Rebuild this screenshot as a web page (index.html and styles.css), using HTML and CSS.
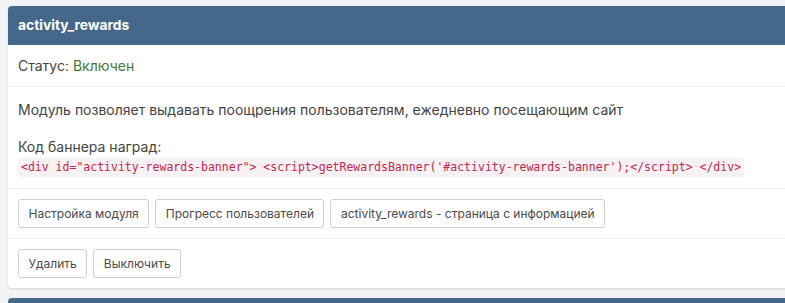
FILE: index.html
```html
<!DOCTYPE html>
<html lang="ru">
<head>
<meta charset="utf-8">
<link rel="stylesheet" href="styles.css">
</head>
<body>
<div class="card">
  <div class="card-head">activity_rewards</div>
  <div class="row">Статус: <span class="on">Включен</span></div>
  <div class="row desc">
    <p>Модуль позволяет выдавать поощрения пользователям, ежедневно посещающим сайт</p>
    <p class="label">Код баннера наград:</p>
    <code>&lt;div id="activity-rewards-banner"&gt; &lt;script&gt;getRewardsBanner('#activity-rewards-banner');&lt;/script&gt; &lt;/div&gt;</code>
  </div>
  <div class="row btns">
    <button class="btn">Настройка модуля</button>
    <button class="btn">Прогресс пользователей</button>
    <button class="btn">activity_rewards - страница с информацией</button>
  </div>
  <div class="row btns last">
    <button class="btn">Удалить</button>
    <button class="btn">Выключить</button>
  </div>
</div>
<div class="card next">
  <div class="card-head">&nbsp;</div>
</div>
</body>
</html>
```
FILE: styles.css
```css
html, body { margin: 0; padding: 0; }
body {
  background: #f3f3f5;
  font-family: Inter, "Noto Sans", sans-serif;
  font-size: 14px;
  color: #444;
  padding: 6px 0 0 8px;
  overflow: hidden;
  width: 860px;
  height: 303px;
}
.card {
  background: #fff;
  border-radius: 4px;
  box-shadow: 0 1px 2px rgba(0,0,0,0.12);
  margin-bottom: 10px;
}
.card-head {
  background: #456789;
  color: #fff;
  font-weight: 700;
  font-size: 13.8px;
  height: 39px;
  line-height: 39px;
  padding: 0 10px;
  border-radius: 4px 4px 0 0;
}
.row {
  padding: 11px 10px 11px;
  line-height: 19px;
  border-bottom: 1px solid #ececec;
}
.on { color: #3f7a33; }
.desc { padding-top: 13px; padding-bottom: 11px; }
.desc p { margin: 0; }
.desc .label { margin-top: 18px; }
code {
  display: inline-block;
  font-family: "DejaVu Sans Mono", monospace;
  font-size: 11.5px;
  line-height: 15px;
  color: #c7254e;
  background: #f9f2f4;
  padding: 2px 3px;
  border-radius: 3px;
}
.btns {
  display: flex;
  gap: 6px;
  padding: 10px 10px 10px;
}
.btns.last { border-bottom: none; }
.btn {
  font-family: Inter, "Noto Sans", sans-serif;
  font-size: 12px;
  color: #4a4a4a;
  background: #fff;
  border: 1px solid #cfcfcf;
  border-radius: 3px;
  height: 29px;
  padding: 0 9.5px;
}
```
